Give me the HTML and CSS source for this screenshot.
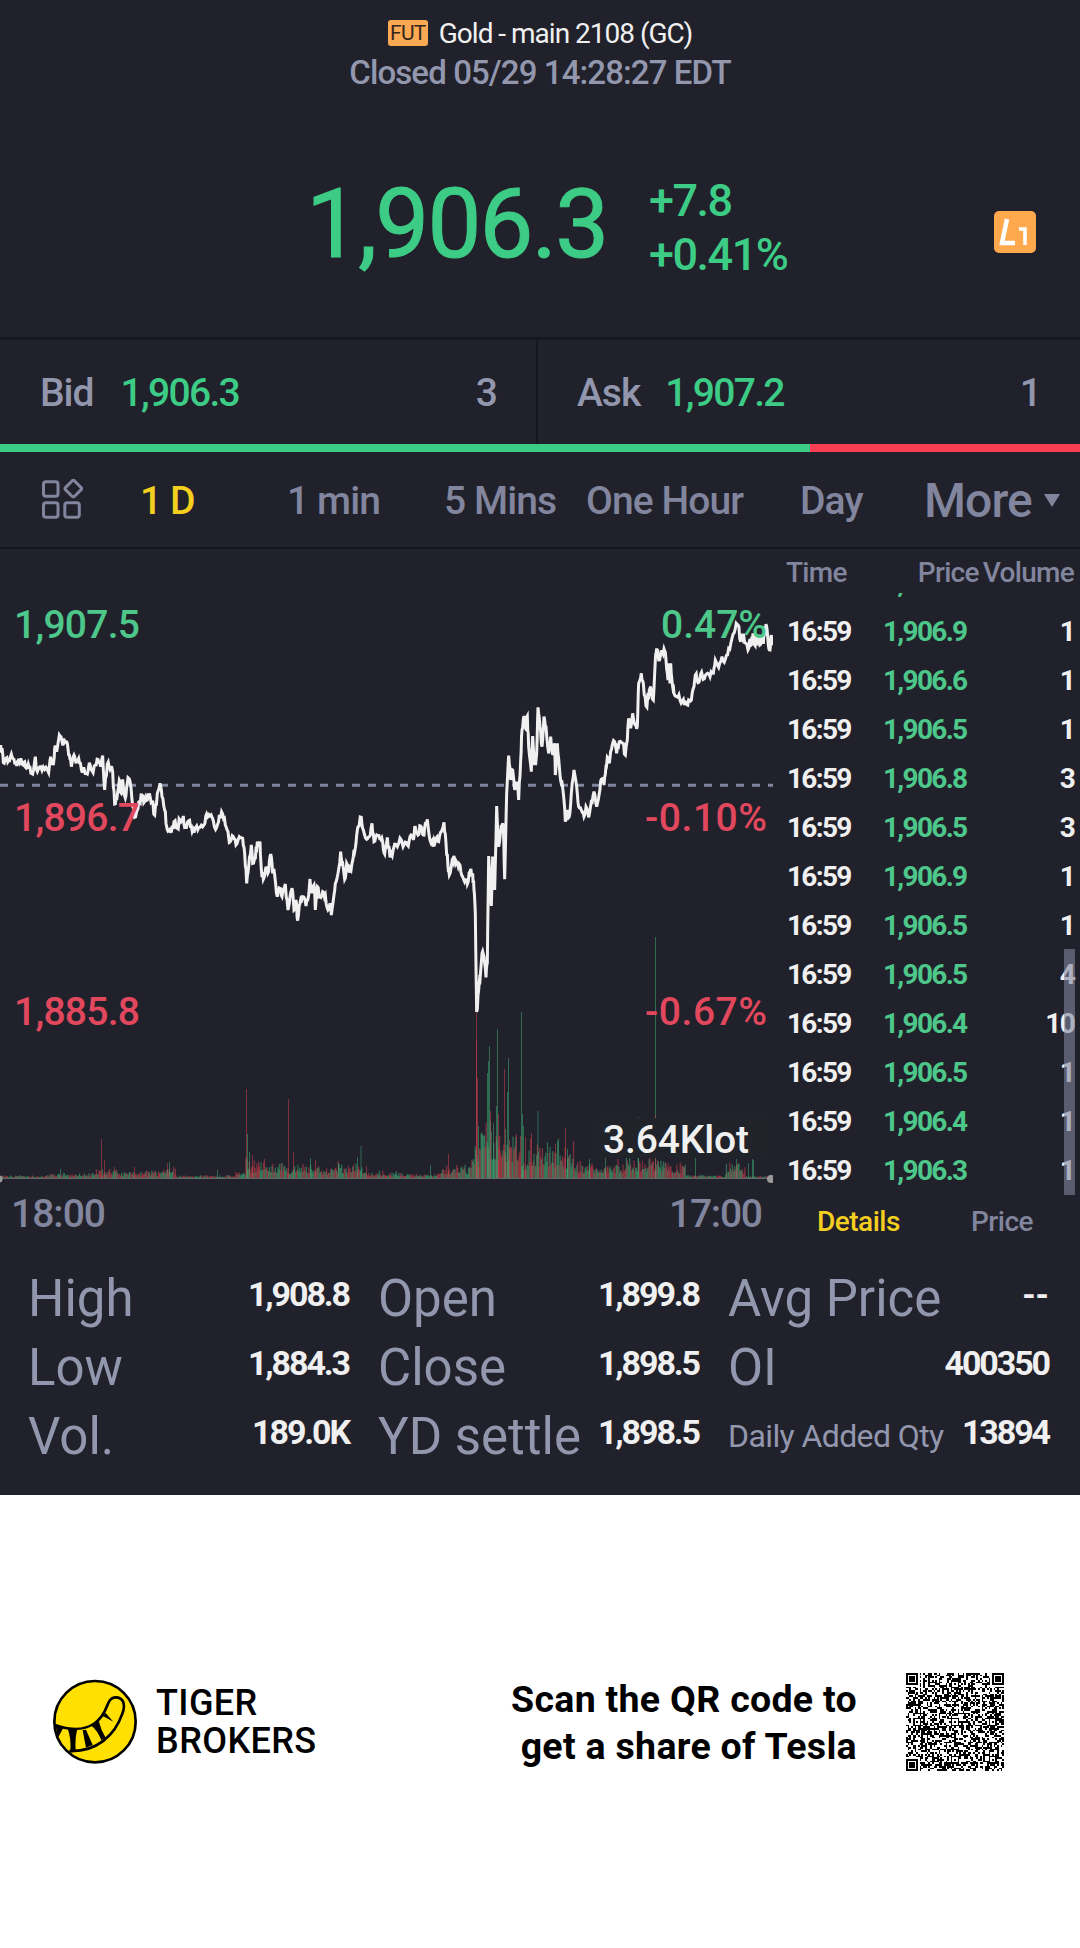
FILE: index.html
```
<!DOCTYPE html>
<html lang="en">
<head>
    <meta charset="UTF-8">
    <meta name="viewport" content="width=device-width, initial-scale=1.0">
    <title>Gold - main 2108 (GC)</title>
    <link rel="stylesheet" href="styles.css">
</head>
<body>

<div class="app">
    <div class="header">
        <div class="title"><span class="fut">FUT</span><span>Gold - main 2108 (GC)</span></div>
        <div class="status">Closed 05/29 14:28:27 EDT</div>
    </div>

    <div class="quote">
        <div class="last">1,906.3</div>
        <div class="change">
            <div>+7.8</div>
            <div>+0.41%</div>
        </div>
        <svg class="level" viewBox="0 0 42 42">
            <rect width="42" height="42" rx="5" fill="#ffa84d"/>
            <path d="M13 8 L8 32 H21" fill="none" stroke="#fff" stroke-width="4.5"/>
            <path d="M25 18 H31 V34" fill="none" stroke="#fff" stroke-width="3.6"/>
        </svg>
    </div>

    <div class="book">
        <div class="side bid"><span class="name">Bid</span><span class="up">1,906.3</span><span class="size">3</span></div>
        <div class="side ask"><span class="name">Ask</span><span class="up">1,907.2</span><span class="size">1</span></div>
    </div>
    <div class="ratio"><div class="ratio-bid"></div></div>

    <div class="tabs">
        <svg class="grid-icon" viewBox="0 0 42 42" fill="none" stroke="#81859d" stroke-width="3">
            <rect x="2.5" y="2.8" width="14.5" height="14.5" rx="2.5"/>
            <rect x="2.5" y="23.8" width="14.5" height="14.5" rx="2.5"/>
            <rect x="23.8" y="23.8" width="14.5" height="14.5" rx="2.5"/>
            <rect x="26" y="3.3" width="12.6" height="12.6" rx="1.8" transform="rotate(45 32.3 9.6)"/>
        </svg>
        <span class="active">1 D</span>
        <span>1 min</span>
        <span>5 Mins</span>
        <span>One Hour</span>
        <span>Day</span>
        <span class="more">More<i class="caret"></i></span>
    </div>

    <div class="market">
        <svg class="chart" width="773" height="714" viewBox="0 549 773 714">
            <line x1="0" y1="785.3" x2="773" y2="785.3" stroke="#81859d" stroke-width="3" stroke-dasharray="8 8"/>
            <g id="volume"></g>
            <path d="M0 1178.5H773" stroke="#5b6a68" stroke-width="1"/>
            <circle cx="-1" cy="1179" r="3.6" fill="#999"/>
            <circle cx="771" cy="1179" r="4" fill="#999"/>
            <rect x="598" y="1118" width="170" height="40" fill="#20232a"/>
            <!-- price line, in thirds of a pixel -->
            <g class="price" transform="translate(0 580) scale(.33333)">
                <polyline points="0,510 6,505 10,548 18,535 26,542 34,522 42,538 50,558 56,536 66,552 74,545 82,562 90,562 98,582 106,530 112,575 122,560 134,568 146,578 152,530 160,555 164,505 170,515 178,465 186,485 194,488 202,490 208,525 214,560 222,525 228,550 236,535 244,568 252,565 262,582 268,548 276,572 286,555 294,538 302,560 308,527 314,630 322,552 330,568 338,575 344,672 350,660 358,600 364,640 368,598 376,655 382,610 388,597 396,660 404,712 412,690 418,665 426,645 434,665 442,660 448,640 456,665 464,705 472,640 480,610 486,650 494,690 500,740 506,752 514,758 522,725 532,745 540,720 550,708 556,742 566,722 574,738 582,758 590,738 600,742 612,735 620,702 630,708 640,722 650,742 658,705 668,702 676,735 684,755 690,786 700,770 708,795 718,770 728,775 734,820 740,910 746,860 754,795 758,850 766,835 772,785 780,785 784,870 790,898 798,860 806,875 812,822 818,880 824,885 832,950 840,925 846,950 856,912 864,990 870,950 876,925 882,990 888,960 893,1022 900,970 908,950 918,978 926,945 930,897 936,940 942,915 946,990 952,920 960,950 968,935 976,945 984,990 990,970 994,1005 1000,960 1006,910 1014,880 1022,815 1028,850 1034,898 1040,850 1048,878 1056,850 1062,810 1068,790 1074,740 1084,712 1090,750 1100,778 1108,770 1116,730 1122,785 1130,765 1140,780"/>
                <polyline transform="translate(1140)" points="0,770 8,785 14,822 22,772 30,832 40,808 52,800 64,780 72,795 82,795 90,770 100,780 106,742 114,765 122,738 130,765 136,730 142,718 150,780 160,800 168,775 176,785 184,755 192,727 198,790 204,860 208,885 216,845 224,835 232,850 240,855 248,890 256,895 262,912 270,875 278,880 282,930 286,1000 290,1296 296,1230 300,1200 306,1120 312,1130 318,1192 322,1150 326,828 334,978 338,830 344,930 350,678 356,800 364,735 370,740 374,898 380,640 386,527 392,600 398,570 404,630 410,605 416,660 422,540 426,450 432,408 440,450 442,408 446,500 454,575 458,468 464,555 470,520 474,382 480,440 486,500 492,410 498,440 506,520 512,470 518,525 524,490 526,585 532,490 538,560 544,610 550,640 556,725 562,690 568,710 574,640 582,570 590,620 596,680 604,690 612,710 618,680 626,712 634,665 642,635 650,680 658,640 664,598 672,615 678,560 682,532 688,550 694,510 704,485 710,520 718,485 728,490 736,525 742,480 746,415 752,445 758,400 766,435 772,438 776,310 784,280 790,310 798,378 806,350 812,320 820,360 826,240 830,205 836,240 844,215 852,207 858,240 864,300 866,250 870,310 872,250 878,320 882,340 890,350 900,360 910,358 918,372 926,360 934,360 942,320 946,285 954,308 962,282 970,298 980,282 990,290 1000,280 1006,240 1016,262 1026,230 1036,238 1046,205 1056,175 1066,145 1074,135 1082,185 1088,165 1094,188 1104,210 1110,178 1114,195 1119,160 1124,195 1128,165 1132,192 1136,165 1140,195 1145,165 1150,192 1154,150 1160,140 1165,195 1170,210 1174,165 1178,190"/>
            </g>
            <g class="labels">
                <g class="green">
                    <text x="14" y="638" textLength="126">1,907.5</text>
                    <text x="661" y="638" textLength="106">0.47%</text>
                </g>
                <g class="red">
                    <text x="14" y="831" textLength="126">1,896.7</text>
                    <text x="645" y="831" textLength="122">-0.10%</text>
                    <text x="14" y="1025" textLength="126">1,885.8</text>
                    <text x="645" y="1025" textLength="122">-0.67%</text>
                </g>
                <text class="white" x="603" y="1153" textLength="146">3.64Klot</text>
                <text class="grey" x="11" y="1227" textLength="95">18:00</text>
                <text class="grey" x="669" y="1227" textLength="94">17:00</text>
            </g>
        </svg>

        <div class="tape">
            <div class="tape-head"><span>Time</span><span class="h-price">Price</span><span class="h-volume">Volume</span></div>
            <div class="ticks">
                <div class="tick"><span></span><span class="up">1,906.5</span><span></span></div>
                <div class="tick"><span>16:59</span><span class="up">1,906.9</span><span>1</span></div>
                <div class="tick"><span>16:59</span><span class="up">1,906.6</span><span>1</span></div>
                <div class="tick"><span>16:59</span><span class="up">1,906.5</span><span>1</span></div>
                <div class="tick"><span>16:59</span><span class="up">1,906.8</span><span>3</span></div>
                <div class="tick"><span>16:59</span><span class="up">1,906.5</span><span>3</span></div>
                <div class="tick"><span>16:59</span><span class="up">1,906.9</span><span>1</span></div>
                <div class="tick"><span>16:59</span><span class="up">1,906.5</span><span>1</span></div>
                <div class="tick"><span>16:59</span><span class="up">1,906.5</span><span>4</span></div>
                <div class="tick"><span>16:59</span><span class="up">1,906.4</span><span>10</span></div>
                <div class="tick"><span>16:59</span><span class="up">1,906.5</span><span>1</span></div>
                <div class="tick"><span>16:59</span><span class="up">1,906.4</span><span>1</span></div>
                <div class="tick"><span>16:59</span><span class="up">1,906.3</span><span>1</span></div>
                <div class="scrollbar"></div>
            </div>
            <div class="tape-tabs"><span class="active">Details</span><span>Price</span></div>
        </div>
    </div>

    <div class="stats">
        <div class="stat"><span>High</span><b>1,908.8</b></div>
        <div class="stat"><span>Open</span><b>1,899.8</b></div>
        <div class="stat"><span>Avg Price</span><b class="empty">--</b></div>
        <div class="stat"><span>Low</span><b>1,884.3</b></div>
        <div class="stat"><span>Close</span><b>1,898.5</b></div>
        <div class="stat"><span>OI</span><b>400350</b></div>
        <div class="stat"><span>Vol.</span><b>189.0K</b></div>
        <div class="stat"><span>YD settle</span><b>1,898.5</b></div>
        <div class="stat"><span class="small">Daily Added Qty</span><b>13894</b></div>
    </div>
</div>

<div class="footer">
    <svg class="logo" viewBox="66 86 258 258">
        <circle cx="195" cy="214" r="122" fill="#ffe000" stroke="#000" stroke-width="8"/>
        <path d="M75 224 C120 240 165 240 195 218 C240 185 225 145 255 141 C282 140 287 165 277 190 C255 255 200 305 118 302" fill="none" stroke="#000" stroke-width="8"/>
        <path d="M76 222 L101 231 L84 262 Z M112 232 L143 233 Q134 262 137 300 L121 302 Q124 262 112 232 Z M158 240 L168 238 L188 284 L168 292 Z M184 226 L206 211 Q213 240 227 262 L214 270 Q203 240 184 226 Z M217 196 L227 188 L250 214 Z"/>
    </svg>
    <div class="brand">TIGER<br>BROKERS</div>
    <div class="scan">Scan the QR code to<br>get a share of Tesla</div>
    <svg class="qr" id="qr" viewBox="0 0 57 57"></svg>
</div>

<script src="script.js"></script>
</body>
</html>
```
FILE: styles.css
```
body {
    margin: 0;
    background-color: #fff;
    font-family: Roboto, "Liberation Sans", sans-serif;
    font-weight: 500;
    color: #f0f0f0;
}

.app {
    height: 1495px;
    background-color: #21212b;
}

.up {
    color: #3dcc85;
}

/* header */
.header {
    padding-top: 13px;
    text-align: center;
}

.title {
    display: flex;
    justify-content: center;
    align-items: center;
    gap: 11px;
    height: 40px;
    font-size: 28px;
    font-weight: 400;
    letter-spacing: -1px;
}

.fut {
    width: 40px;
    height: 26px;
    line-height: 27px;
    border-radius: 3px;
    background-color: #fba952;
    color: #33261c;
    font-size: 21px;
    letter-spacing: -0.8px;
}

.status {
    line-height: 40px;
    font-size: 33px;
    color: #9297ae;
    letter-spacing: -0.9px;
}

/* last price */
.quote {
    display: flex;
    align-items: center;
    height: 228px;
    padding: 16px 44px 0 306px;
    color: #3dcc85;
}

.last {
    width: 343px;
    padding-top: 2px;
    font-size: 96px;
    font-weight: 400;
    letter-spacing: -1.8px;
    -webkit-text-stroke: 1px #3dcc85;
}

.change {
    margin-top: 10px;
    font-size: 45px;
    line-height: 54px;
    letter-spacing: -1.5px;
}

.level {
    width: 42px;
    height: 42px;
    margin: 17px 0 0 auto;
}

/* bid / ask */
.book {
    display: flex;
    height: 104px;
    border-top: 3px solid #16161f;
    font-size: 39px;
    letter-spacing: -1px;
}

.side {
    display: flex;
    flex: 1;
    align-items: center;
    padding: 2px 39px 0 39px;
    color: #9297ae;
}

.bid {
    flex: 0 0 457px;
    padding-right: 39px;
    padding-left: 40px;
    border-right: 2px solid #16161f;
}

.side .name {
    margin-right: 27px;
}

.ask .name {
    margin-right: 25px;
}

.side .up {
    letter-spacing: -1.7px;
}

.side .size {
    margin-left: auto;
}

.ratio {
    height: 8px;
    background-color: #fa3e54;
}

.ratio-bid {
    width: 75%;
    height: 100%;
    background-color: #3dcc85;
}

/* period tabs */
.tabs {
    display: grid;
    grid-template-columns: 99px 147px 157px 142px 214px 124px auto;
    align-items: center;
    height: 94px;
    padding: 1px 0 0 41px;
    border-bottom: 2px solid #16161f;
    font-size: 39px;
    letter-spacing: -0.9px;
    color: #81859d;
}

.tabs span {
    padding-top: 1px;
}

.grid-icon {
    width: 42px;
    height: 42px;
}

.active {
    color: #f4cf1f;
}

.more {
    display: flex;
    align-items: center;
    font-size: 48px;
}

.caret {
    margin-left: 12px;
    border: 8px solid transparent;
    border-top: 13px solid #81859d;
    border-bottom: 0;
}

/* chart and trades */
.market {
    display: flex;
    height: 714px;
}

.chart {
    flex: none;
}

.price {
    fill: none;
    stroke: #f0f0f0;
    stroke-width: 9;
}

.labels {
    font-size: 39px;
}

.green {
    fill: #4dc78a;
}

.red {
    fill: #e2485d;
}

.white {
    fill: #f0f0f0;
}

.grey {
    fill: #81859d;
}

.tape {
    flex: 1;
    min-width: 0;
    font-size: 28px;
}

.tape-head {
    display: flex;
    height: 44px;
    line-height: 48px;
    padding-left: 13px;
    letter-spacing: -0.7px;
    color: #81859d;
}

.h-price {
    width: 62px;
    margin-left: 71px;
}

.h-volume {
    margin-left: 3px;
}

.ticks {
    position: relative;
    display: flex;
    flex-direction: column;
    justify-content: flex-end;
    height: 602px;
    overflow: hidden;
}

.tick {
    display: grid;
    grid-template-columns: 96px 100px auto;
    flex: none;
    height: 49px;
    line-height: 49px;
    padding: 0 6px 0 14px;
    font-weight: 700;
    letter-spacing: -1.7px;
}

.tick .up {
    color: #4dc78a;
}

.tick span:last-child {
    text-align: right;
}

.scrollbar {
    position: absolute;
    right: 5px;
    bottom: 0;
    width: 11px;
    height: 246px;
    background-color: rgba(129, 133, 157, 0.6);
}

.tape-tabs {
    display: flex;
    line-height: 54px;
    padding-left: 44px;
    letter-spacing: -0.5px;
    color: #81859d;
}

.tape-tabs .active {
    width: 154px;
}

/* statistics */
.stats {
    display: grid;
    grid-template-columns: repeat(3, 321px);
    column-gap: 29px;
    padding: 0 28px;
}

.stat {
    display: flex;
    justify-content: space-between;
    height: 69px;
    line-height: 72px;
    font-size: 51px;
    font-weight: 400;
    color: #9297ae;
}

.stat b {
    line-height: 62px;
    font-size: 34px;
    font-weight: 700;
    letter-spacing: -2.1px;
    color: #f0f0f0;
}

.stat .empty {
    letter-spacing: 0;
}

.stat .small {
    font-size: 32px;
    line-height: 70px;
    letter-spacing: -0.6px;
}

/* footer */
.footer {
    display: flex;
    align-items: center;
    height: 453px;
    padding-left: 52px;
    color: #000;
}

.logo {
    width: 86px;
    height: 86px;
}

.brand {
    width: 200px;
    margin-left: 18px;
    font-size: 36px;
    line-height: 38px;
    letter-spacing: 0.4px;
}

.scan {
    width: 501px;
    padding-top: 2px;
    text-align: right;
    font-size: 37.5px;
    line-height: 47px;
    font-weight: 700;
    letter-spacing: 0.3px;
}

.qr {
    width: 98px;
    height: 98px;
    margin-left: 49px;
}
```
FILE: script.js
```
// simple seeded generator so the drawing is stable
let seed = 7;
function rnd() {
    seed = (seed * 16807) % 2147483647;
    return seed / 2147483647;
}

const NS = 'http://www.w3.org/2000/svg';
function rect(parent, x, y, w, h, fill) {
    const r = document.createElementNS(NS, 'rect');
    r.setAttribute('x', x);
    r.setAttribute('y', y);
    r.setAttribute('width', w);
    r.setAttribute('height', h);
    r.setAttribute('fill', fill);
    parent.appendChild(r);
}

// minute noise between the main points of the price line
document.querySelectorAll('.price polyline').forEach(line => {
    const pts = line.getAttribute('points').split(' ').map(p => p.split(',').map(Number));
    const out = [];
    pts.forEach(([x, y], i) => {
        out.push(x + ',' + y);
        const next = pts[i + 1];
        if (next) {
            for (let k = 1; k < 3; k++) {
                const nx = x + (next[0] - x) * k / 3;
                const ny = y + (next[1] - y) * k / 3 + (rnd() - 0.5) * 26;
                out.push(nx.toFixed(1) + ',' + ny.toFixed(1));
            }
        }
    });
    line.setAttribute('points', out.join(' '));
});

// volume bars
const volume = document.getElementById('volume');
const GREEN = 'rgba(61, 180, 120, 0.5)';
const RED = 'rgba(215, 65, 80, 0.5)';
const base = 1179;

// [until x, typical height]
const levels = [[48, 3], [95, 5], [118, 10], [160, 8], [175, 11], [235, 3], [245, 8], [265, 20], [320, 15], [335, 12],
    [362, 16], [400, 7], [440, 5], [470, 14], [478, 36], [520, 56], [526, 28], [558, 38], [575, 36], [625, 18],
    [640, 26], [665, 24], [685, 18], [725, 4], [745, 16], [773, 2]];
let li = 0;
for (let x = 0; x < 770; x += 0.84) {
    while (x > levels[li][0]) li++;
    const h = 1 + levels[li][1] * (0.25 + 0.85 * rnd() * Math.sqrt(rnd()));
    rect(volume, x, base - h, 1.3, h, rnd() > 0.5 ? GREEN : RED);
}

const spikes = [[60, 10, 1], [101, 40, 0], [104, 19, 0], [114, 12, 0], [134, 12, 0], [167, 16, 0], [169, 17, 1],
    [217, 9, 1], [246, 90, 0], [247, 45, 1], [249, 27, 1], [252, 24, 0], [288, 80, 0], [293, 27, 0], [310, 21, 1],
    [315, 19, 0], [338, 16, 1], [357, 22, 1], [360.5, 33, 1], [366, 13, 0], [430, 14, 1], [448, 25, 0],
    [476, 166, 0], [476, 139, 0], [477, 101, 0], [478, 53, 1], [482, 44, 1], [487, 106, 1], [488, 118, 1],
    [489, 133, 1], [490, 68, 0], [493, 56, 1], [496, 73, 1], [497, 150, 1], [498, 65, 0], [504, 110, 0], [505, 50, 1],
    [507, 87, 1], [508, 121, 1], [509, 39, 0], [521, 167, 1], [522, 65, 1], [523, 53, 1], [525, 42, 0],
    [531, 46, 0], [537.5, 68, 1], [555, 35, 0], [565, 51, 0], [567, 30, 1], [589, 20, 1], [605, 22, 1],
    [638, 62, 1], [655, 242, 1], [655, 64, 0], [695, 22, 1], [736, 20, 1], [748, 16, 1], [752, 20, 1], [753, 19, 1]];
spikes.forEach(([x, h, up]) => rect(volume, x, base - h, 1, h, up ? GREEN : RED));

// QR code
const qr = document.getElementById('qr');
qr.setAttribute('shape-rendering', 'crispEdges');
function finder(x, y) {
    rect(qr, x - 1, y - 1, 9, 9, '#fff');
    rect(qr, x, y, 7, 7, '#000');
    rect(qr, x + 1, y + 1, 5, 5, '#fff');
    rect(qr, x + 2, y + 2, 3, 3, '#000');
}
for (let y = 0; y < 57; y++) {
    for (let x = 0; x < 57; x++) {
        if (rnd() > 0.5) rect(qr, x, y, 1, 1, '#000');
    }
}
finder(0, 0);
finder(50, 0);
finder(0, 50);
[[28, 6], [6, 28], [28, 28], [50, 28], [28, 50], [50, 50]].forEach(([x, y]) => {
    rect(qr, x - 2, y - 2, 5, 5, '#000');
    rect(qr, x - 1, y - 1, 3, 3, '#fff');
    rect(qr, x, y, 1, 1, '#000');
});
```
